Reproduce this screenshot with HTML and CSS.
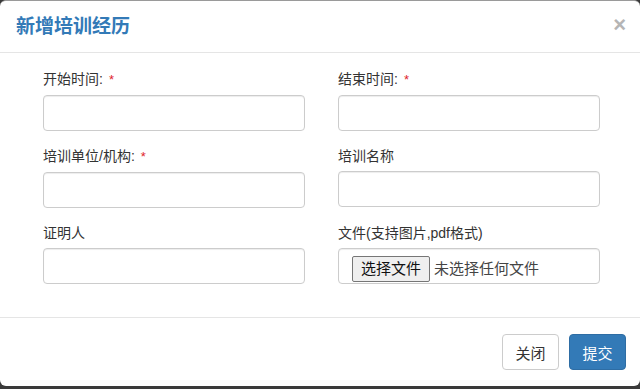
FILE: index.html
```html
<!DOCTYPE html>
<html lang="zh-CN">
<head>
<meta charset="utf-8">
<title>新增培训经历</title>
<link rel="stylesheet" href="styles.css">
</head>
<body>
<div class="modal">
  <div class="modal-header">
    <h4 class="modal-title">新增培训经历</h4>
    <span class="close">×</span>
  </div>
  <div class="modal-body">
    <div class="field">
      <label class="field-label">开始时间:<span class="req">*</span></label>
      <input class="form-control" type="text">
    </div>
    <div class="field">
      <label class="field-label">结束时间:<span class="req">*</span></label>
      <input class="form-control" type="text">
    </div>
    <div class="field">
      <label class="field-label">培训单位/机构:<span class="req">*</span></label>
      <input class="form-control" type="text">
    </div>
    <div class="field">
      <label class="field-label">培训名称</label>
      <input class="form-control" type="text">
    </div>
    <div class="field">
      <label class="field-label">证明人</label>
      <input class="form-control" type="text">
    </div>
    <div class="field">
      <label class="field-label">文件(支持图片,pdf格式)</label>
      <div class="form-control file-control">
        <span class="file-btn">选择文件</span>
        <span class="file-text">未选择任何文件</span>
      </div>
    </div>
  </div>
  <div class="modal-footer">
    <button class="btn btn-default">关闭</button>
    <button class="btn btn-primary">提交</button>
  </div>
</div>
</body>
</html>
```

FILE: styles.css
```css
html, body {
  margin: 0;
  padding: 0;
}
body {
  width: 640px;
  height: 389px;
  background: #3a3a3a;
  font-family: "Liberation Sans", "Noto Sans CJK SC", sans-serif;
  color: #333;
  overflow: hidden;
}
.modal {
  width: 640px;
  height: 385px;
  background: #fff;
  border-top: 1px solid #9a9a9a;
  border-radius: 6px;
  display: flex;
  flex-direction: column;
  box-sizing: content-box;
}
.modal-header {
  height: 53px;
  border-bottom: 1px solid #e5e5e5;
  display: flex;
  align-items: center;
  justify-content: space-between;
  padding: 0 14px 0 16px;
}
.modal-title {
  margin: 0;
  font-size: 19px;
  font-weight: bold;
  color: #337ab7;
  line-height: 24px;
  padding-top: 1px;
}
.close {
  font-size: 22px;
  font-weight: bold;
  color: #b5b5b5;
  line-height: 1;
  margin-top: -3px;
}
.modal-body {
  display: grid;
  grid-template-columns: 262px 262px;
  column-gap: 33px;
  row-gap: 15px;
  padding: 16px 40px 33px 43px;
}
.field {
  display: flex;
  flex-direction: column;
}
.field-label {
  font-size: 14px;
  line-height: 20px;
  margin-bottom: 5px;
  color: #333;
}
.req {
  color: #e0242b;
  margin-left: 6px;
  font-size: 13px;
}
.form-control {
  height: 36px;
  box-sizing: border-box;
  border: 1px solid #ccc;
  border-radius: 4px;
  box-shadow: inset 0 1px 1px rgba(0,0,0,.075);
  background: #fff;
  margin: 0;
  font-size: 14px;
}
.file-control {
  display: flex;
  align-items: flex-start;
  padding: 7px 0 0 13px;
}
.file-btn {
  height: 26px;
  box-sizing: border-box;
  border: 1px solid #767676;
  border-radius: 2px;
  background: #efefef;
  font-size: 15px;
  line-height: 24px;
  padding: 0 8px;
  color: #111;
}
.file-text {
  margin-left: 4px;
  font-size: 15px;
  line-height: 26px;
  color: #444;
}
.modal-footer {
  border-top: 1px solid #e5e5e5;
  padding: 16px 14px 16px 0;
  display: flex;
  justify-content: flex-end;
  gap: 10px;
}
.btn {
  height: 36px;
  width: 57px;
  box-sizing: border-box;
  border-radius: 4px;
  font-family: "Liberation Sans", "Noto Sans CJK SC", sans-serif;
  font-size: 15px;
  padding: 0;
  margin: 0;
}
.btn-default {
  background: #fff;
  border: 1px solid #ccc;
  color: #333;
}
.btn-primary {
  background: #337ab7;
  border: 1px solid #2e6da4;
  color: #fff;
}
```
